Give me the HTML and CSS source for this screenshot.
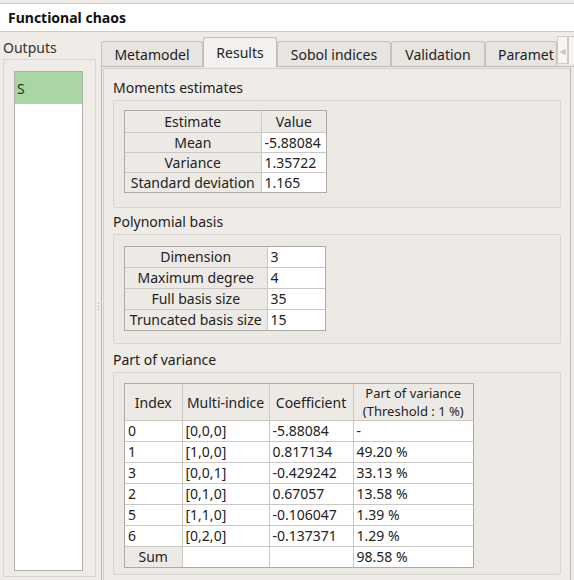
FILE: index.html
```html
<!DOCTYPE html>
<html>
<head>
<meta charset="utf-8">
<link rel="stylesheet" href="styles.css">
</head>
<body>
<div class="title">Functional chaos</div>
<div class="main">
  <div class="left">
    <div class="left-label">Outputs</div>
    <div class="left-frame">
      <div class="list">
        <div class="item">S</div>
      </div>
    </div>
  </div>
  <div class="splitter"><span></span><span></span><span></span></div>
  <div class="right">
    <div class="tabbar">
      <div class="tab t1">Metamodel</div>
      <div class="tab active t2">Results</div>
      <div class="tab t3">Sobol indices</div>
      <div class="tab t4">Validation</div>
      <div class="tab t5">Paramet</div>
      <div class="scrollbtns">
        <div class="sbtn">&#9664;</div>
        <div class="sbtn2"></div>
      </div>
    </div>
    <div class="pane">
      <div class="scrollarea">
        <div class="gl gl1">Moments estimates</div>
        <div class="group g1">
          <div class="tw">
            <table class="mom">
              <colgroup><col style="width:136px"><col style="width:65px"></colgroup>
              <tr><th>Estimate</th><th>Value</th></tr>
              <tr><th>Mean</th><td>-5.88084</td></tr>
              <tr><th>Variance</th><td>1.35722</td></tr>
              <tr><th>Standard deviation</th><td>1.165</td></tr>
            </table>
          </div>
        </div>
        <div class="gl gl2">Polynomial basis</div>
        <div class="group g2">
          <div class="tw">
            <table class="poly">
              <colgroup><col style="width:142px"><col style="width:58px"></colgroup>
              <tr><th>Dimension</th><td>3</td></tr>
              <tr><th>Maximum degree</th><td>4</td></tr>
              <tr><th>Full basis size</th><td>35</td></tr>
              <tr><th>Truncated basis size</th><td>15</td></tr>
            </table>
          </div>
        </div>
        <div class="gl gl3">Part of variance</div>
        <div class="group g3">
          <div class="tw">
            <table class="var">
              <colgroup><col style="width:57px"><col style="width:87px"><col style="width:84px"><col style="width:120px"></colgroup>
              <tr class="hdr"><th>Index</th><th>Multi-indice</th><th>Coefficient</th><th><span class="l">Part of variance</span><span class="l">(Threshold : 1 %)</span></th></tr>
              <tr><td>0</td><td>[0,0,0]</td><td>-5.88084</td><td>-</td></tr>
              <tr><td>1</td><td>[1,0,0]</td><td>0.817134</td><td>49.20 %</td></tr>
              <tr><td>3</td><td>[0,0,1]</td><td>-0.429242</td><td>33.13 %</td></tr>
              <tr><td>2</td><td>[0,1,0]</td><td>0.67057</td><td>13.58 %</td></tr>
              <tr><td>5</td><td>[1,1,0]</td><td>-0.106047</td><td>1.39 %</td></tr>
              <tr><td>6</td><td>[0,2,0]</td><td>-0.137371</td><td>1.29 %</td></tr>
              <tr><th>Sum</th><td></td><td></td><td>98.58 %</td></tr>
            </table>
          </div>
        </div>
      </div>
    </div>
  </div>
</div>
</body>
</html>
```

FILE: styles.css
```css
html, body {
  margin: 0;
  padding: 0;
}
body {
  background: #efebe7;
  font-family: "Noto Sans", "DejaVu Sans", sans-serif;
  font-size: 13px;
  color: #333;
  width: 574px;
  height: 580px;
  overflow: hidden;
}
.title {
  margin-top: 3px;
  height: 27px;
  line-height: 27px;
  border-top: 1px solid #cdc9c4;
  border-bottom: 1px solid #cdc9c4;
  background: #fff;
  font-weight: bold;
  font-size: 14px;
  padding-left: 8px;
  color: #111;
}
.main {
  display: flex;
  height: 549px;
}
.left {
  width: 93px;
  margin-left: 3px;
  flex: none;
}
.left-label {
  height: 27px;
  line-height: 32px;
  font-size: 14px;
}
.left-frame {
  height: 518px;
  border: 1px solid #d9d5d0;
  padding: 11px 0 0 10px;
  box-sizing: border-box;
}
.list {
  width: 69px;
  height: 500px;
  box-sizing: border-box;
  border: 1px solid #b3afab;
  background: #fff;
}
.item {
  height: 32px;
  line-height: 34px;
  background: #a9d6a2;
  padding-left: 2px;
  font-size: 14px;
}
.splitter {
  width: 5px;
  flex: none;
  display: flex;
  flex-direction: column;
  align-items: center;
  justify-content: center;
  gap: 2px;
}
.splitter span {
  width: 1px;
  height: 1px;
  background: #a8a4a0;
}
.right {
  flex: 1;
  min-width: 0;
  display: flex;
  flex-direction: column;
}
.tabbar {
  height: 34px;
  display: flex;
  align-items: flex-end;
  flex: none;
  position: relative;
  z-index: 1;
}
.tab {
  flex: none;
  box-sizing: border-box;
  height: 25px;
  border: 1px solid #c6c2bd;
  border-bottom: none;
  border-radius: 3px 3px 0 0;
  background: #e8e4e0;
  text-align: center;
  line-height: 26px;
  font-size: 14px;
  color: #222;
}
.tab.active {
  background: #f3f1ef;
  line-height: 30px;
  margin-bottom: -1px;
  height: 30px;
  border-color: #c2beb9;
}
.t1 { width: 102px; }
.t2 { width: 74px; }
.t3 { width: 114px; }
.t4 { width: 94px; }
.t5 { width: 72px; text-align: left; padding-left: 12px; overflow: hidden; white-space: nowrap; }
.scrollbtns {
  flex: none;
  display: flex;
  align-self: stretch;
  align-items: flex-end;
}
.sbtn {
  width: 11px;
  height: 28px;
  box-sizing: border-box;
  border: 1px solid #cfcbc6;
  background: #f6f5f3;
  color: #c9c5c1;
  font-size: 8px;
  line-height: 28px;
  text-align: center;
  margin-bottom: 2px;
}
.sbtn2 {
  width: 6px;
  height: 28px;
  box-sizing: border-box;
  border-left: 1px solid #cfcbc6;
  border-top: 1px solid #cfcbc6;
  background: #f6f5f3;
  margin-bottom: 2px;
}
.pane {
  flex: 1;
  border-top: 1px solid #bdb9b4;
  border-left: 1px solid #bdb9b4;
  padding: 1px 0 0 1px;
}
.scrollarea {
  width: 468px;
  height: 520px;
  box-sizing: border-box;
  border-left: 1px solid #d4d0cb;
  border-top: 1px solid #d4d0cb;
  border-right: 1px solid #bcb8b3;
  padding: 0 0 0 9px;
}
.gl {
  display: flex;
  align-items: flex-end;
  line-height: 20px;
  padding-bottom: 2px;
  box-sizing: border-box;
  font-size: 14px;
  color: #222;
}
.gl1 { height: 31px; }
.gl2 { height: 26px; }
.gl3 { height: 28px; }
.group {
  width: 448px;
  box-sizing: border-box;
  border: 1px solid #d9d5d0;
  border-radius: 2px;
  background: #ece9e5;
  padding-left: 10px;
}
.g1 { height: 108px; padding-top: 9px; }
.g2 { height: 110px; padding-top: 11px; }
.g3 { height: 203px; padding-top: 10px; }
.tw {
  display: inline-block;
  border: 1px solid #aeaaa6;
  vertical-align: top;
}
table {
  border-collapse: collapse;
  table-layout: fixed;
  font-size: 14px;
  color: #222;
}
th, td {
  border: 1px solid #cbc7c3;
  padding: 0 3px;
  height: 20px;
  line-height: 20px;
  white-space: nowrap;
  overflow: hidden;
}
table tr:first-child th, table tr:first-child td { border-top: none; }
table tr:last-child th, table tr:last-child td { border-bottom: none; }
table th:first-child, table td:first-child { border-left: none; }
table th:last-child, table td:last-child { border-right: none; }
th {
  background: #edeae6;
  font-weight: normal;
  text-align: center;
}
td {
  background: #fff;
  text-align: left;
}
.mom th, .mom td { height: 19px; line-height: 19px; }
.mom tr:first-child th { height: 21px; }
.var tr.hdr th {
  height: 34px;
  line-height: 17px;
}
.var .l {
  display: block;
  height: 18px;
  line-height: 18px;
  font-size: 13px;
}
```
